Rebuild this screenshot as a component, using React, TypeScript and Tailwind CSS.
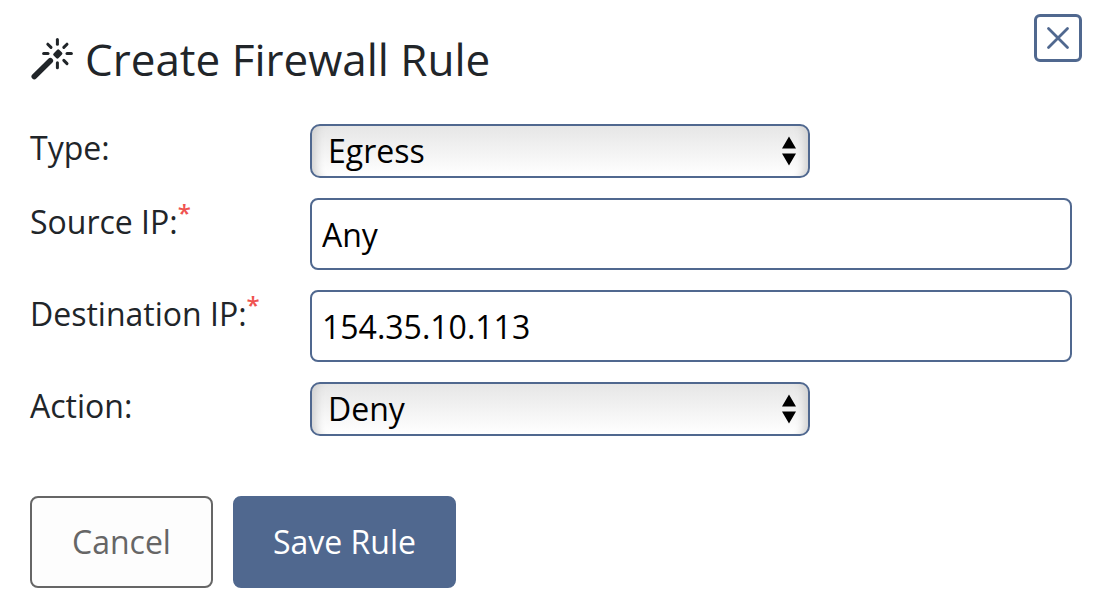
import { ReactNode } from 'react';

const BORDER = 'border-2 border-[#50688f]';

const WandIcon = () => (
   <svg
      className="size-11 shrink-0"
      viewBox="0 0 44 44"
      fill="none"
      stroke="currentColor"
      strokeLinecap="round"
      aria-hidden="true"
   >
      <path d="M4.3 39.5 20.3 23.8" strokeWidth="5.6" />
      <path
         d="M24.6 17.4 28.2 13.8 31 16.6 27.4 20.2z"
         fill="currentColor"
         stroke="currentColor"
         strokeWidth="2.8"
         strokeLinejoin="round"
      />
      <g strokeWidth="3">
         <path d="M27.4 2.6v4.6" />
         <path d="M27.4 25.8v5" />
         <path d="M13.6 16.6h4.4" />
         <path d="M37 16.6h4.4" />
         <path d="M17.8 7.2l3.2 3.2" />
         <path d="M37 7.2l-3.2 3.2" />
         <path d="M33.8 23.4l3.2 3.2" />
      </g>
   </svg>
);

const CloseIcon = () => (
   <svg
      className="size-6"
      viewBox="0 0 24 24"
      fill="none"
      stroke="currentColor"
      strokeWidth="2.8"
      strokeLinecap="round"
      aria-hidden="true"
   >
      <path d="M2.5 2.5l19 19M21.5 2.5l-19 19" />
   </svg>
);

const FormRow = ({
   id,
   label,
   required = false,
   children,
}: {
   id: string;
   label: string;
   required?: boolean;
   children: ReactNode;
}) => {
   return (
      <div className="flex items-start">
         <label htmlFor={id} className="w-[280px] shrink-0 text-[32px] leading-[48px] whitespace-nowrap">
            {label}
            {required && <sup className="text-[24px] font-semibold text-[#ef5350]">*</sup>}
         </label>
         <div className="min-w-0 flex-1">{children}</div>
      </div>
   );
};

const SelectField = ({ id, options }: { id: string; options: string[] }) => {
   return (
      <div className="relative w-[500px] max-w-full">
         <select
            id={id}
            className={`${BORDER} block h-[54px] w-full appearance-none rounded-[10px] bg-linear-to-b from-[#e6e6e6] to-white pl-4 text-[32px] leading-[48px] text-black shadow-[inset_12px_0_8px_-8px_#d0d0d0,inset_-12px_0_8px_-8px_#d0d0d0]`}
         >
            {options.map((option) => (
               <option key={option}>{option}</option>
            ))}
         </select>
         <svg
            className="pointer-events-none absolute top-3 right-3 h-[30px] w-[18px]"
            viewBox="0 0 18 30"
            aria-hidden="true"
         >
            <path d="M9 0.5 16 12.5H2zM9 29.5 16 17.5H2z" />
         </svg>
      </div>
   );
};

const TextField = ({ id, value }: { id: string; value: string }) => {
   return (
      <input
         id={id}
         type="text"
         required
         defaultValue={value}
         className={`${BORDER} block h-[72px] w-full rounded-lg bg-white px-[10px] text-[32px] leading-[48px] text-black`}
      />
   );
};

export default function App() {
   return (
      <form
         className="relative bg-white px-[30px] pt-[29px] pb-7 font-['Open_Sans','Noto_Sans',sans-serif] text-[#212529]"
         onSubmit={(e) => e.preventDefault()}
      >
         <button
            type="button"
            aria-label="Close"
            className="absolute top-[14px] right-5 flex size-12 items-center justify-center rounded-md border-3 border-[#50688f] text-[#50688f]"
         >
            <CloseIcon />
         </button>

         <h1 className="flex items-center gap-[11px] text-[44px] leading-[60px]">
            <WandIcon />
            Create Firewall Rule
         </h1>

         <div className="mt-[35px] flex flex-col gap-5">
            <FormRow id="type" label="Type:">
               <SelectField id="type" options={['Egress', 'Ingress']} />
            </FormRow>
            <FormRow id="source" label="Source IP:" required>
               <TextField id="source" value="Any" />
            </FormRow>
            <FormRow id="destination" label="Destination IP:" required>
               <TextField id="destination" value="154.35.10.113" />
            </FormRow>
            <FormRow id="action" label="Action:">
               <SelectField id="action" options={['Deny', 'Allow']} />
            </FormRow>
         </div>

         <div className="mt-[60px] flex gap-5">
            <button
               type="button"
               className="rounded-lg border-2 border-[#666666] bg-[#fdfdfd] px-10 py-5 text-[32px] leading-[48px] text-[#666666]"
            >
               Cancel
            </button>
            <button
               type="submit"
               className="rounded-lg border-2 border-[#50688f] bg-[#50688f] px-[38px] py-5 text-[32px] leading-[48px] text-white"
            >
               Save Rule
            </button>
         </div>
      </form>
   );
}
